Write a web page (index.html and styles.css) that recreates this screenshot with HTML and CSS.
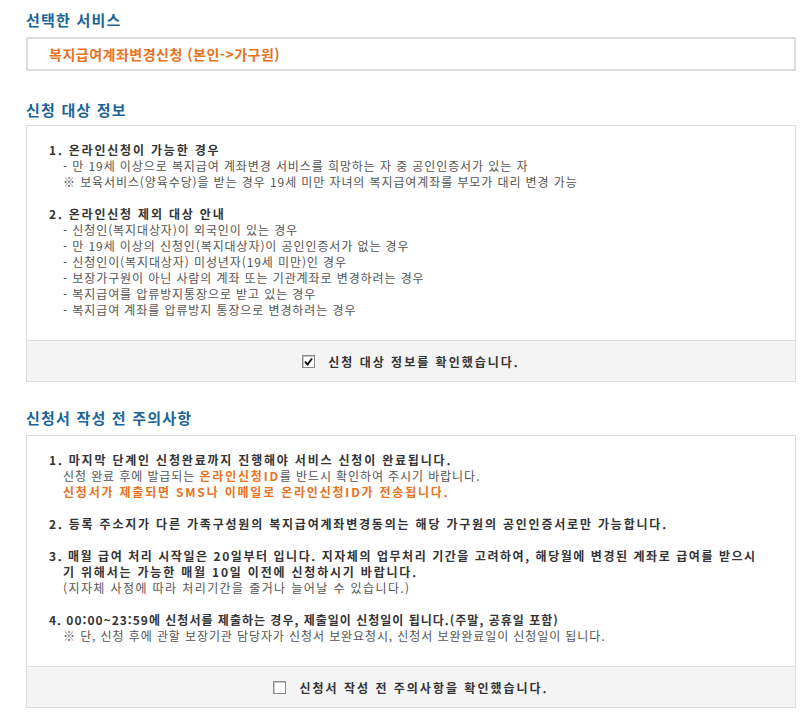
FILE: index.html
```html
<!DOCTYPE html>
<html lang="ko">
<head>
<meta charset="utf-8">
<link rel="stylesheet" href="styles.css">
</head>
<body>
<div class="page">
  <h2 class="title first">선택한 서비스</h2>
  <div class="service">복지급여계좌변경신청 (본인-&gt;가구원)</div>

  <h2 class="title">신청 대상 정보</h2>
  <div class="panel">
    <div class="panel-body body-a">
      <div class="item">
        <p class="head">1. 온라인신청이 가능한 경우</p>
        <p class="sub">- 만 19세 이상으로 복지급여 계좌변경 서비스를 희망하는 자 중 공인인증서가 있는 자</p>
        <p class="sub">※ 보육서비스(양육수당)을 받는 경우 19세 미만 자녀의 복지급여계좌를 부모가 대리 변경 가능</p>
      </div>
      <div class="item">
        <p class="head">2. 온라인신청 제외 대상 안내</p>
        <p class="sub">- 신청인(복지대상자)이 외국인이 있는 경우</p>
        <p class="sub">- 만 19세 이상의 신청인(복지대상자)이 공인인증서가 없는 경우</p>
        <p class="sub">- 신청인이(복지대상자) 미성년자(19세 미만)인 경우</p>
        <p class="sub">- 보장가구원이 아닌 사람의 계좌 또는 기관계좌로 변경하려는 경우</p>
        <p class="sub">- 복지급여를 압류방지통장으로 받고 있는 경우</p>
        <p class="sub">- 복지급여 계좌를 압류방지 통장으로 변경하려는 경우</p>
      </div>
    </div>
    <div class="panel-foot">
      <span class="check checked"><svg width="9" height="9" viewBox="0 0 9 9"><path d="M1 4.5 L3.5 7.5 L8 1.5" fill="none" stroke="#000" stroke-width="1.8"/></svg></span>
      <span class="confirm">신청 대상 정보를 확인했습니다.</span>
    </div>
  </div>

  <h2 class="title third">신청서 작성 전 주의사항</h2>
  <div class="panel">
    <div class="panel-body body-b">
      <div class="item">
        <p class="head">1. 마지막 단계인 신청완료까지 진행해야 서비스 신청이 완료됩니다.</p>
        <p class="sub">신청 완료 후에 발급되는 <b class="orange">온라인신청ID</b>를 반드시 확인하여 주시기 바랍니다.</p>
        <p class="sub"><b class="orange">신청서가 제출되면 SMS나 이메일로 온라인신청ID가 전송됩니다.</b></p>
      </div>
      <div class="item">
        <p class="head">2. 등록 주소지가 다른 가족구성원의 복지급여계좌변경동의는 해당 가구원의 공인인증서로만 가능합니다.</p>
      </div>
      <div class="item">
        <p class="head long">3. 매월 급여 처리 시작일은 20일부터 입니다. 지자체의 업무처리 기간을 고려하여, 해당월에 변경된 계좌로 급여를 받으시</p>
        <p class="head cont">기 위해서는 가능한 매월 10일 이전에 신청하시기 바랍니다.</p>
        <p class="sub wide">(지자체 사정에 따라 처리기간을 줄거나 늘어날 수 있습니다.)</p>
      </div>
      <div class="item">
        <p class="head narrow">4. 00:00~23:59에 신청서를 제출하는 경우, 제출일이 신청일이 됩니다.(주말, 공휴일 포함)</p>
        <p class="sub">※ 단, 신청 후에 관할 보장기관 담당자가 신청서 보완요청시, 신청서 보완완료일이 신청일이 됩니다.</p>
      </div>
    </div>
    <div class="panel-foot">
      <span class="check"></span>
      <span class="confirm">신청서 작성 전 주의사항을 확인했습니다.</span>
    </div>
  </div>
</div>
</body>
</html>
```
FILE: styles.css
```css
* { box-sizing: border-box; }
html, body { margin: 0; padding: 0; background: #fff; }
body {
  font-family: "Noto Sans CJK KR", "Liberation Sans", sans-serif;
  font-size: 12px;
  color: #555;
}
.page {
  width: 770px;
  margin-left: 26px;
  padding-top: 11px;
}
.title {
  margin: 0;
  font-size: 15px;
  line-height: 18px;
  font-weight: bold;
  color: #1a6498;
  letter-spacing: 1.2px;
}
.title.first { margin-bottom: 8px; }
.service {
  height: 34px;
  border: 2px solid #dcdcdc;
  padding-left: 21px;
  line-height: 30px;
  font-size: 14px;
  font-weight: bold;
  color: #e8721e;
  letter-spacing: 0.5px;
}
.title + .panel { margin-top: 6px; }
.service + .title { margin-top: 30px; }
.panel + .title.third { margin-top: 27px; }
.title.third + .panel { margin-top: 8px; }
.panel {
  border: 1px solid #dcdcdc;
}
.panel-body {
  padding: 16px 0 22px 22px;
}
.item + .item { margin-top: 16px; }
.item p {
  margin: 0;
  line-height: 16px;
  white-space: nowrap;
}
.head {
  font-weight: bold;
  color: #333;
  letter-spacing: 1.8px;
}
.head.long { letter-spacing: 1.55px; }
.head.narrow { letter-spacing: 1px; }
.head.cont { padding-left: 14px; }
.sub {
  padding-left: 14px;
  color: #555;
  letter-spacing: 0.9px;
}
.sub.wide { letter-spacing: 1.4px; }
.orange {
  color: #e8721e;
  font-weight: bold;
  letter-spacing: 1.8px;
}
.panel-foot {
  border-top: 1px solid #dcdcdc;
  background: #f4f4f4;
  height: 41px;
  display: flex;
  align-items: center;
  justify-content: center;
  gap: 13px;
}
.check {
  width: 13px;
  height: 13px;
  border: 1px solid #8a8a8a;
  background: #fff;
  display: inline-flex;
  align-items: center;
  justify-content: center;
  box-shadow: inset 1px 1px 0 #c8c8c8;
}
.confirm {
  font-weight: bold;
  color: #333;
  font-size: 12px;
  letter-spacing: 2px;
}
```
